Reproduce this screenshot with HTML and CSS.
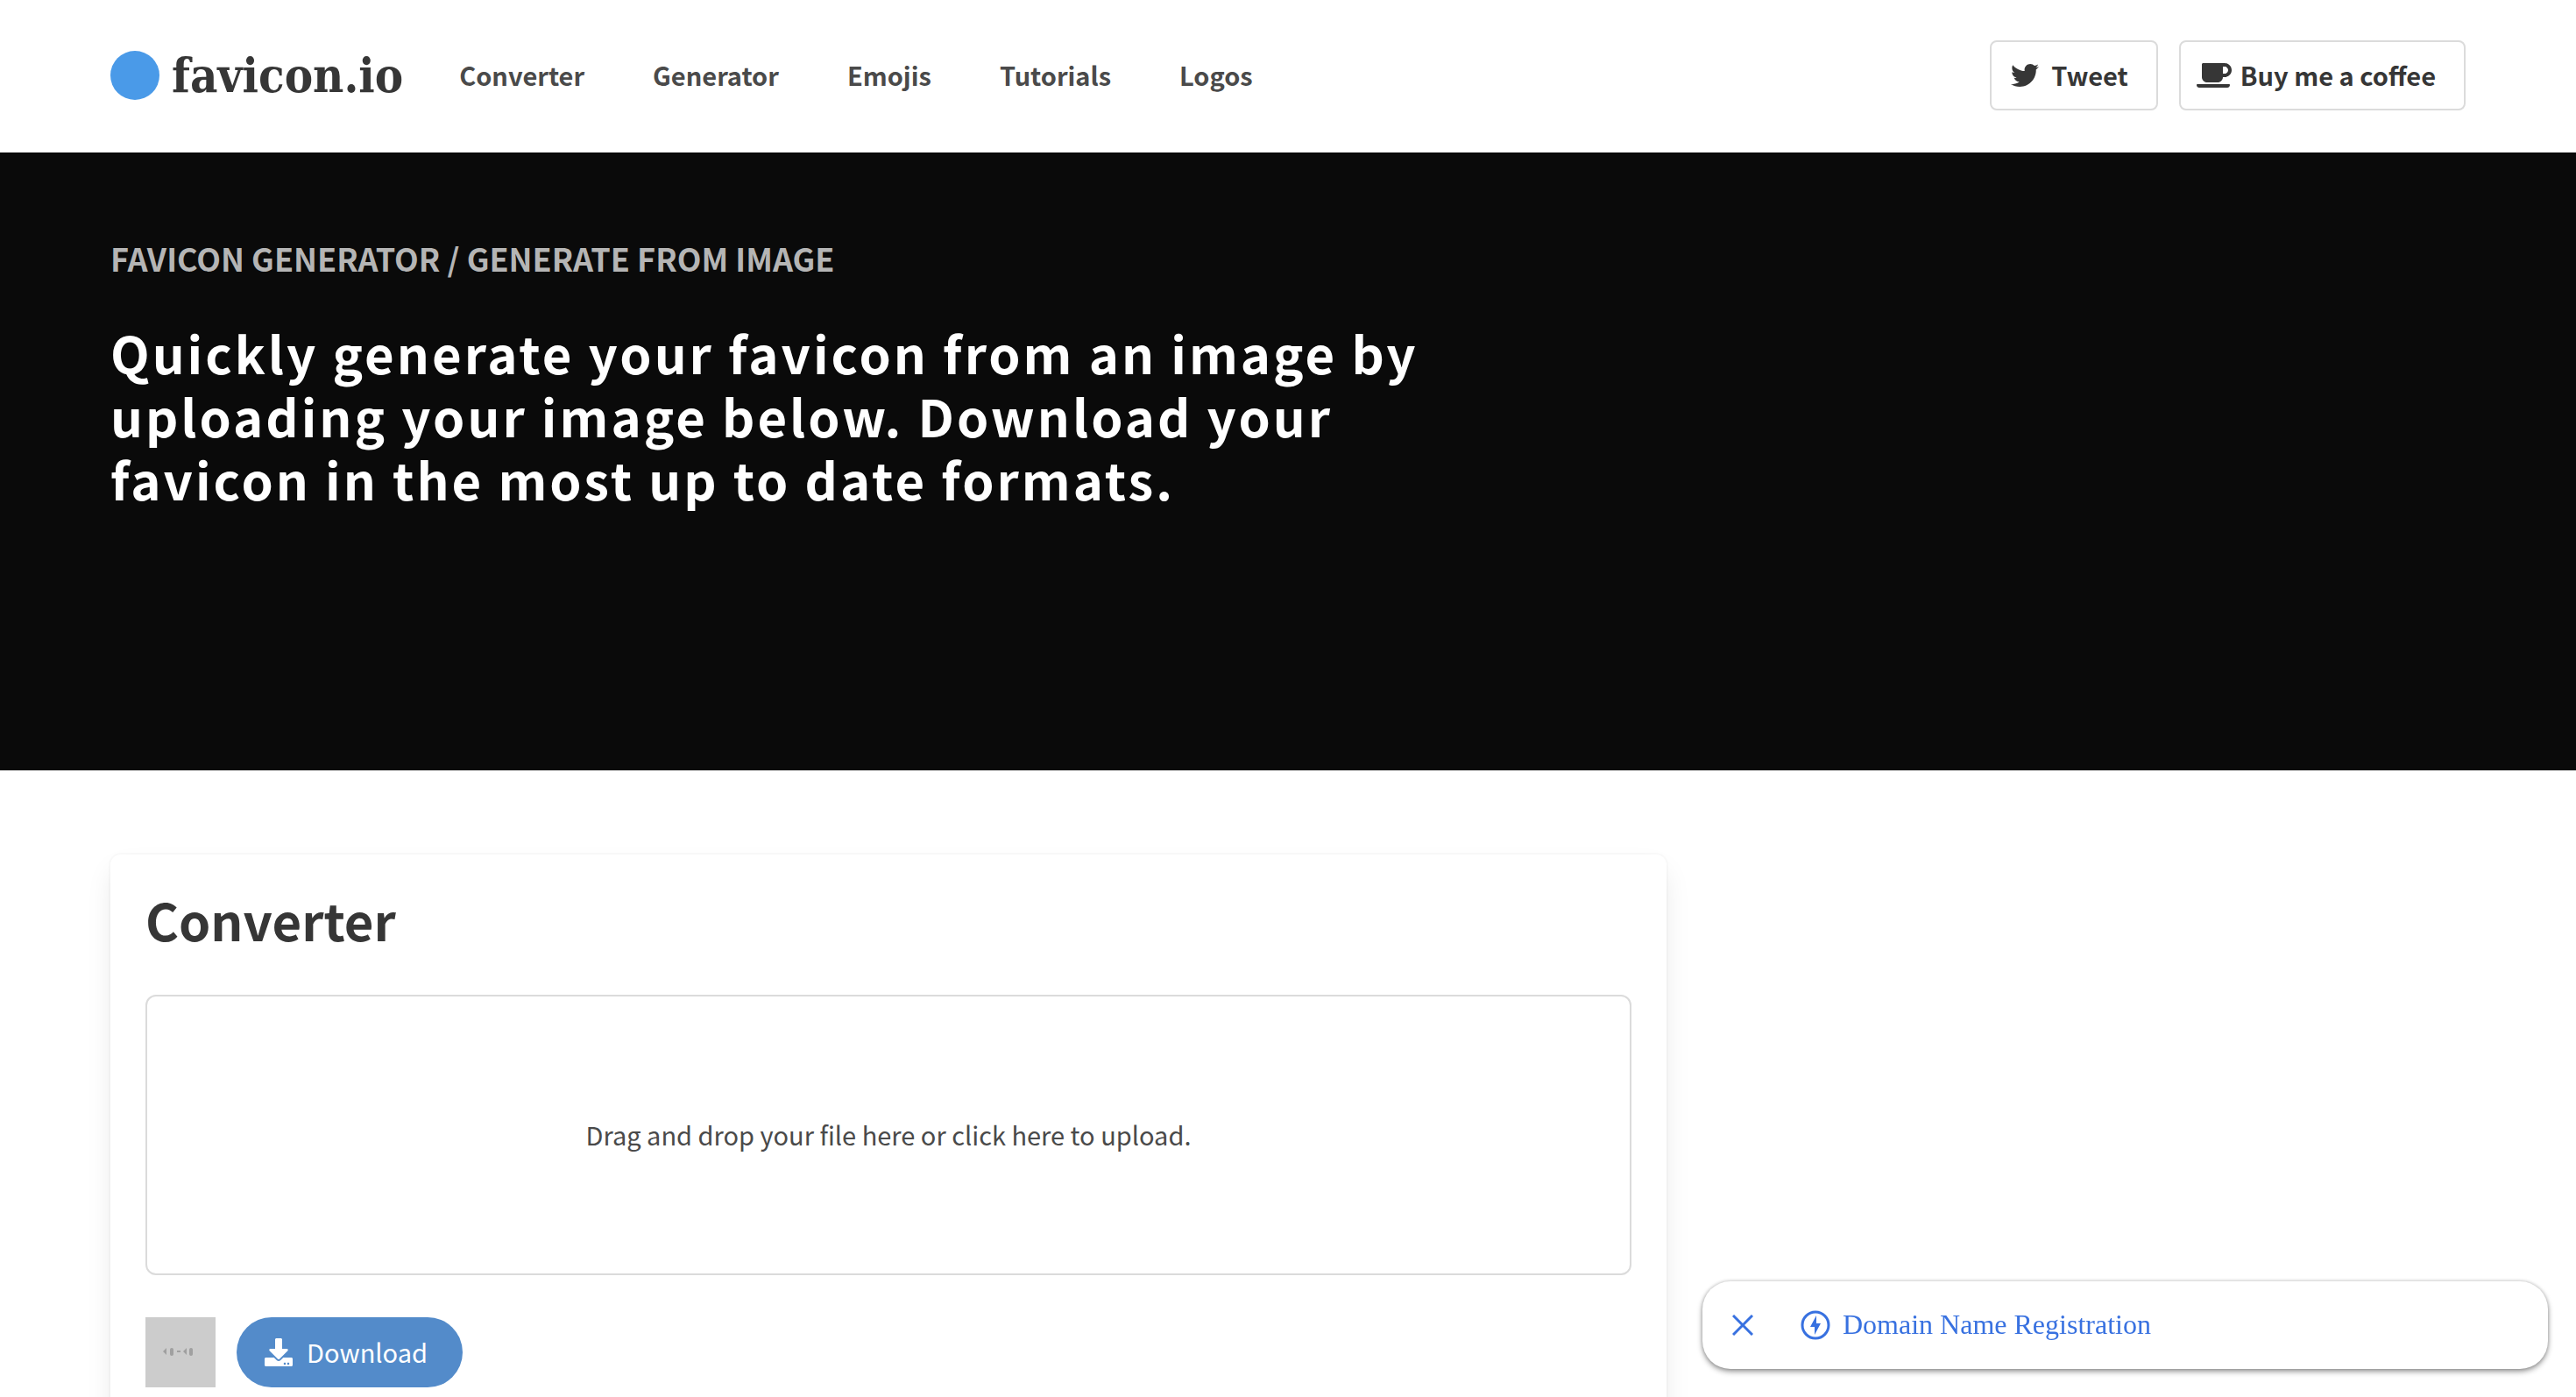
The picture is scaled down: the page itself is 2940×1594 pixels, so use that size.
FILE: index.html
```html
<!DOCTYPE html>
<html lang="en">
<head>
<meta charset="utf-8">
<meta name="viewport" content="width=device-width, initial-scale=1">
<title>Favicon Generator / Generate from Image</title>
<link rel="stylesheet" href="styles.css">
</head>
<body>
<header class="navbar">
  <div class="container navbar-inner">
    <a class="brand" href="#"><span class="brand-mark"></span>favicon.io</a>
    <nav class="nav-links">
      <a href="#">Converter</a>
      <a href="#">Generator</a>
      <a href="#">Emojis</a>
      <a href="#">Tutorials</a>
      <a href="#">Logos</a>
    </nav>
    <div class="nav-actions">
      <a class="outline-button" href="#">
        <svg class="icon-twitter" viewBox="0 0 512 512" aria-hidden="true"><path d="M459.370 151.716c.325 4.548.325 9.097.325 13.645 0 138.720-105.583 298.558-298.558 298.558-59.452 0-114.680-17.219-161.137-47.106 8.447.974 16.568 1.299 25.340 1.299 49.055 0 94.213-16.568 130.274-44.832-46.132-.975-84.792-31.188-98.112-72.772 6.498.974 12.995 1.624 19.818 1.624 9.421 0 18.843-1.300 27.614-3.573-48.081-9.747-84.143-51.980-84.143-102.985v-1.299c13.969 7.797 30.214 12.670 47.431 13.319-28.264-18.843-46.781-51.005-46.781-87.391 0-19.492 5.197-37.360 14.294-52.954 51.655 63.675 129.300 105.258 216.365 109.807-1.624-7.797-2.599-15.918-2.599-24.040 0-57.828 46.782-104.934 104.934-104.934 30.213 0 57.502 12.670 76.670 33.137 23.715-4.548 46.456-13.320 66.599-25.340-7.798 24.366-24.366 44.833-46.132 57.827 21.117-2.273 41.584-8.122 60.426-16.243-14.292 20.791-32.161 39.308-52.628 54.253z"/></svg>
        <span class="label">Tweet</span>
      </a>
      <a class="outline-button" href="#">
        <svg class="icon-coffee" viewBox="0 0 640 512" aria-hidden="true"><path d="M192 384h192c53 0 96-43 96-96h32c70.600 0 128-57.400 128-128S582.600 32 512 32H120c-13.300 0-24 10.700-24 24v232c0 53 43 96 96 96zM512 96c35.300 0 64 28.700 64 64s-28.700 64-64 64h-32V96h32zm47.700 384H48.300c-47.600 0-61-64-36-64h583.300c25 0 11.800 64-35.900 64z"/></svg>
        <span class="label">Buy me a coffee</span>
      </a>
    </div>
  </div>
</header>
<section class="hero">
  <div class="container">
    <h1 class="hero-label">Favicon Generator / Generate from Image</h1>
    <p class="hero-title">Quickly generate your favicon from an image by uploading your image below. Download your favicon in the most up to date formats.</p>
  </div>
</section>
<main class="container main">
  <section class="box">
    <h2 class="box-title">Converter</h2>
    <button class="dropzone" type="button"><span class="label">Drag and drop your file here or click here to upload.</span></button>
    <div class="result">
      <svg class="preview" viewBox="0 0 80 80" role="img" aria-label="Preview">
        <rect width="80" height="80" fill="#ccc"/>
        <g fill="#a0a0a0"><path d="M20 39l4-4v8zM43 39l4-4v8z"/><rect x="28" y="35" width="4" height="9" rx="2"/><rect x="36" y="38" width="4" height="2"/><rect x="50" y="35" width="4" height="9" rx="2"/></g>
      </svg>
      <button class="download" type="button">
        <svg class="icon-download" viewBox="0 0 512 512" aria-hidden="true"><path d="M216 0h80c13.300 0 24 10.700 24 24v168h87.700c17.800 0 26.700 21.500 14.100 34.100L269.700 378.300c-7.500 7.500-19.800 7.500-27.300 0L90.100 226.100c-12.600-12.600-3.700-34.100 14.100-34.100H192V24c0-13.300 10.700-24 24-24zm296 376v112c0 13.300-10.700 24-24 24H24c-13.300 0-24-10.700-24-24V376c0-13.300 10.700-24 24-24h146.700l49 49c20.100 20.100 52.500 20.100 72.600 0l49-49H488c13.300 0 24 10.700 24 24zm-124 88c0-11-9-20-20-20s-20 9-20 20 9 20 20 20 20-9 20-20zm64 0c0-11-9-20-20-20s-20 9-20 20 9 20 20 20 20-9 20-20z"/></svg>
        <span class="label">Download</span>
      </button>
    </div>
  </section>
</main>
<aside class="promo">
  <button class="promo-close" type="button" aria-label="Close">
    <svg viewBox="0 0 24 24" aria-hidden="true"><path d="M1 1l22 22M23 1L1 23" fill="none" stroke="currentColor" stroke-width="3"/></svg>
  </button>
  <a class="promo-link" href="#">
    <svg class="icon-bolt" viewBox="0 0 34 34" aria-hidden="true"><circle cx="17" cy="17" r="15" fill="none" stroke="currentColor" stroke-width="3"/><path d="M18 6L11 19h5v9l7-13h-5z" fill="currentColor"/></svg>
    <span class="label">Domain Name Registration</span>
  </a>
</aside>
</body>
</html>
```
FILE: styles.css
```css
* {
  box-sizing: border-box;
}

body {
  margin: 0;
  background: #fff;
  color: #4a4a4a;
  font-family: "Noto Sans CJK SC", "Open Sans", sans-serif;
  font-size: 29px;
  line-height: 48px;
}

a {
  color: inherit;
  text-decoration: none;
}

h1, h2, p {
  margin: 0;
}

button {
  margin: 0;
  font: inherit;
  color: inherit;
  cursor: pointer;
}

svg {
  display: block;
  flex: none;
  fill: currentColor;
}

.container {
  width: calc(100% - 128px);
  max-width: 2688px;
  margin: 0 auto;
}

.label {
  display: block;
  padding-bottom: 2px;
}

.navbar-inner {
  display: flex;
  align-items: center;
  min-height: 174px;
  padding-bottom: 2px;
  font-weight: 700;
}

.brand {
  display: flex;
  align-items: center;
  gap: 14px;
  color: #363636;
  font-family: "DejaVu Serif Condensed", "DejaVu Serif", serif;
  font-size: 54px;
}

.brand-mark {
  width: 56px;
  height: 56px;
  border-radius: 50%;
  background: #4a9ae8;
}

.nav-links {
  display: flex;
  gap: 78px;
  margin-left: 64px;
  padding-bottom: 2px;
}

.nav-actions {
  display: flex;
  gap: 24px;
  margin-left: auto;
}

.outline-button {
  display: flex;
  align-items: center;
  height: 80px;
  padding: 0 32px 0 18px;
  border: 2px solid #dbdbdb;
  border-radius: 8px;
  color: #363636;
}

.icon-twitter {
  width: 32px;
  height: 32px;
  margin: 0 14px 0 4px;
}

.icon-coffee {
  width: 40px;
  height: 32px;
  margin-right: 10px;
}

.hero {
  min-height: 705px;
  padding: 96px 0;
  background: #0a0a0a;
}

.hero-label {
  color: #b5b5b5;
  font-size: 36px;
  text-transform: uppercase;
}

.hero-title {
  max-width: 1560px;
  margin-top: 48px;
  color: #fff;
  font-size: 58px;
  font-weight: 700;
  line-height: 72px;
  letter-spacing: 3px;
}

.main {
  padding-top: 96px;
}

.box {
  width: calc(200% / 3 - 16px);
  padding: 40px;
  border-radius: 12px;
  background: #fff;
  box-shadow: 0 16px 32px -4px rgba(10, 10, 10, 0.1), 0 0 0 2px rgba(10, 10, 10, 0.02);
}

.box-title {
  color: #363636;
  font-size: 58px;
  line-height: 68px;
}

.dropzone {
  display: block;
  width: 100%;
  height: 320px;
  margin-top: 52px;
  border: 2px solid #dbdbdb;
  border-radius: 12px;
  background: #fff;
}

.result {
  display: flex;
  gap: 24px;
  margin-top: 48px;
}

.preview {
  width: 80px;
  height: 80px;
}

.download {
  display: flex;
  align-items: center;
  gap: 16px;
  height: 80px;
  padding: 0 40px 0 32px;
  border: 0;
  border-radius: 40px;
  background: #538bca;
  color: #fff;
}

.icon-download {
  width: 32px;
  height: 32px;
}

.promo {
  position: fixed;
  right: 32px;
  bottom: 32px;
  display: flex;
  align-items: center;
  width: 965px;
  max-width: calc(100% - 64px);
  height: 100px;
  padding: 0 34px;
  border-radius: 32px;
  background: #fff;
  box-shadow: 0 3px 6px rgba(0, 0, 0, 0.4), 0 0 4px rgba(0, 0, 0, 0.2);
  color: #3871e0;
  font-family: "Liberation Serif", serif;
  font-size: 32px;
}

.promo-close {
  width: 24px;
  padding: 0;
  border: 0;
  background: none;
}

.promo-link {
  display: flex;
  align-items: center;
  gap: 14px;
  margin-left: 54px;
}

.icon-bolt {
  width: 34px;
  height: 34px;
}
```
